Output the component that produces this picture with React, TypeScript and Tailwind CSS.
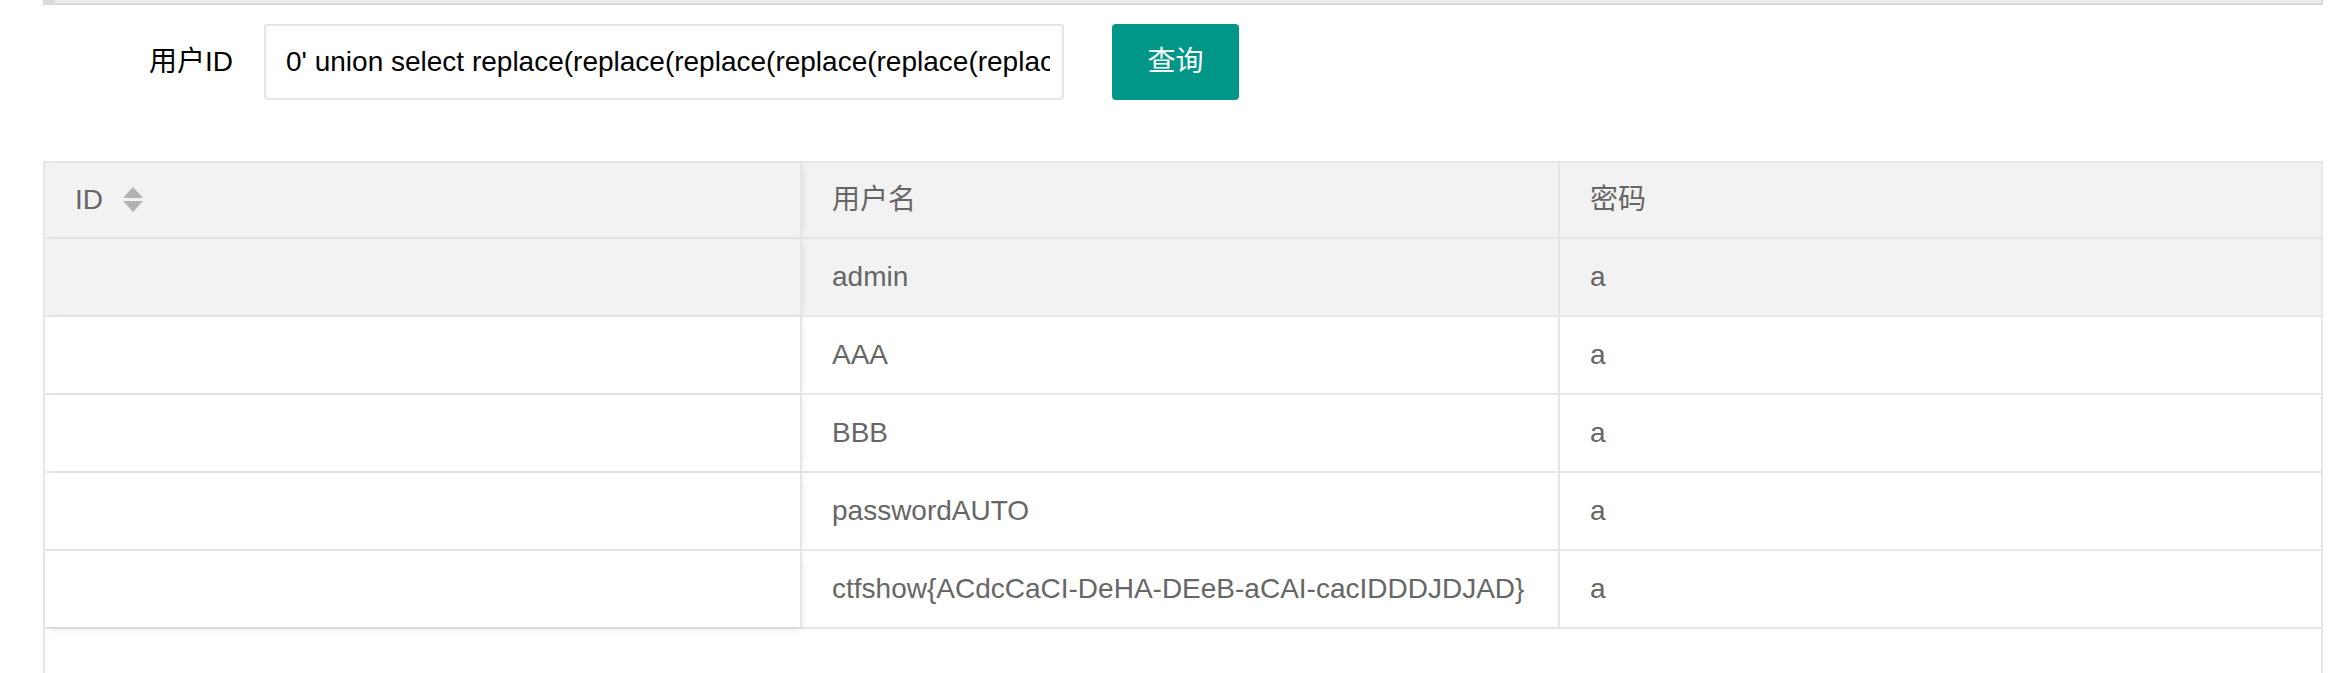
import React from "react";

const rows = [
  { name: "admin", pwd: "a", active: true },
  { name: "AAA", pwd: "a" },
  { name: "BBB", pwd: "a" },
  { name: "passwordAUTO", pwd: "a" },
  { name: "ctfshow{ACdcCaCI-DeHA-DEeB-aCAI-cacIDDDJDJAD}", pwd: "a" },
];

const query =
  "0' union select replace(replace(replace(replace(replace(replace(replace(replace(password,'1','A'),'2','B'),'3','C'),'4','D'),'5','E'),'6','F'),'7','G'),'8','H') from ctfshow_user4 --+";

function SortIcon() {
  return (
    <svg width="20" height="26" viewBox="0 0 20 26" className="ml-[20px]">
      <polygon points="10,0 20,11 0,11" fill="#b2b2b2" />
      <polygon points="0,14 20,14 10,25" fill="#b2b2b2" />
    </svg>
  );
}

export default function App() {
  return (
    <div
      className="h-[673px] overflow-hidden bg-white text-[28px]"
      style={{ fontFamily: '"Liberation Sans", "Noto Sans CJK SC", sans-serif' }}
    >
      <div className="ml-[43px] w-[2280px]">
        <div className="h-[5px] bg-[#ececec] border-l-[12px] border-r-2 border-b-2 border-[#dadada]" />

        <div className="mt-[19px] flex items-center h-[76px]">
          <label className="w-[221px] pr-[31px] text-right text-[#000] leading-none">
            用户ID
          </label>
          <input
            readOnly
            value={query}
            className="w-[800px] h-[76px] pl-[20px] pr-[12px] border-2 border-[#e6e6e6] rounded-[4px] text-[28px] text-black outline-none bg-white"
          />
          <button className="ml-[48px] w-[127px] h-[76px] rounded-[4px] bg-[#009688] text-white text-[28px]">
            查询
          </button>
        </div>

        <div className="mt-[61px] border-2 border-[#e6e6e6] text-[#666] h-[600px]">
          <div className="flex h-[76px] bg-[#f2f2f2] border-b-2 border-[#e6e6e6]">
            <div className="w-[757px] flex items-center px-[30px] border-r-2 border-[#e6e6e6] shadow-[4px_0_8px_-4px_rgba(0,0,0,0.1)] relative">
              <span>ID</span>
              <SortIcon />
            </div>
            <div className="w-[758px] flex items-center px-[30px] border-r-2 border-[#e6e6e6]">
              用户名
            </div>
            <div className="flex-1 flex items-center px-[30px]">密码</div>
          </div>

          {rows.map((r, i) => (
            <div
              key={i}
              className={`flex h-[78px] border-b-2 border-[#e6e6e6] ${r.active ? "bg-[#f2f2f2]" : "bg-white"}`}
            >
              <div
                className={`w-[757px] border-r-2 border-[#e6e6e6] relative ${
                  i === rows.length - 1
                    ? "shadow-[2px_4px_8px_-2px_rgba(0,0,0,0.1)]"
                    : "shadow-[4px_0_8px_-4px_rgba(0,0,0,0.1)]"
                }`}
              />
              <div className="w-[758px] flex items-center px-[30px] border-r-2 border-[#e6e6e6] whitespace-nowrap">
                {r.name}
              </div>
              <div className="flex-1 flex items-center px-[30px]">{r.pwd}</div>
            </div>
          ))}
        </div>
      </div>
    </div>
  );
}
